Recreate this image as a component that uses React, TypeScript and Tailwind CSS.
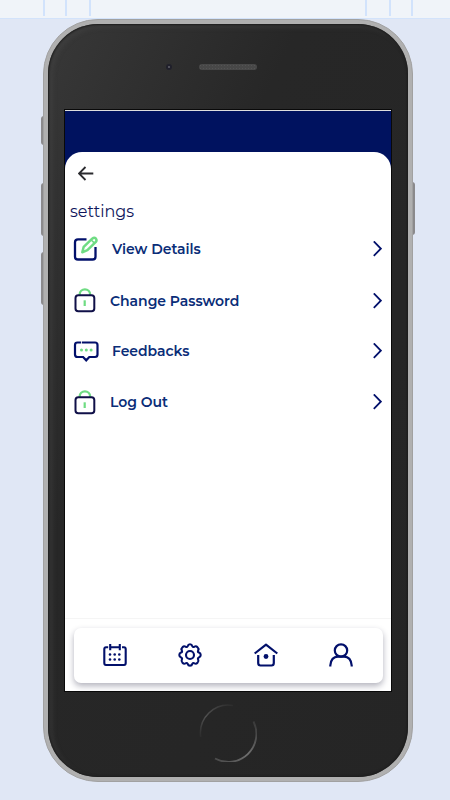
import React from 'react';

const NAVY = '#02106b';
const GREEN = '#6fdc83';

function BackIcon() {
  return (
    <svg width="16" height="15" viewBox="0 0 16 15" fill="none" stroke="#2b2b2f" strokeWidth="1.8">
      <path d="M15.3 7.5H1M7.5 1 1 7.5 7.5 14" />
    </svg>
  );
}

function EditIcon() {
  return (
    <svg width="26" height="26" viewBox="0 0 26 26" fill="none" strokeLinecap="round" strokeLinejoin="round">
      <path
        d="M13.5 3.3H5Q2 3.3 2 6.3V20.7Q2 23.5 5 23.5H19.5Q22.5 23.5 22.5 20.7V11"
        stroke={NAVY}
        strokeWidth="2.3"
        strokeLinecap="butt"
      />
      <path
        d="M9.3 16.3 10.7 10.8 19.2 2.7Q21.3 1 22.8 2.5 24.3 4.2 22.6 6.2L14.4 14.2Z"
        stroke={GREEN}
        strokeWidth="2.5"
      />
      <path d="m18.500 4.2 2.7 2.7" stroke={GREEN} strokeWidth="1.6" />
    </svg>
  );
}

function LockIcon() {
  return (
    <svg width="22" height="25" viewBox="0 0 22 25" fill="none">
      <path d="M5.700 7.500V6.300A5.200 5 0 0 1 16.100 6.300V7.500" stroke={GREEN} strokeWidth="2.3" />
      <rect x="1.500" y="7.300" width="18.800" height="16" rx="2.800" stroke="#101048" strokeWidth="2" />
      <path d="M10.700 12.300V18" stroke={GREEN} strokeWidth="2.2" />
    </svg>
  );
}

function ChatIcon() {
  return (
    <svg width="26" height="22" viewBox="0 0 26 22" fill="none">
      <path
        d="M9 2.500H22Q24.500 2.500 24.500 5V14.500Q24.500 17 22 17H16.300L13.200 20.300 10.100 17H4.500Q2 17 2 14.500V5Q2 2.500 4.500 2.500H8.200"
        stroke={NAVY}
        strokeWidth="2.2"
      />
      <g fill={GREEN}>
        <circle cx="8.500" cy="10" r="1.500" />
        <circle cx="13.300" cy="10" r="1.500" />
        <circle cx="18.100" cy="10" r="1.500" />
      </g>
    </svg>
  );
}

function ChevronIcon() {
  return (
    <svg width="10" height="16" viewBox="0 0 10 16" fill="none" stroke={NAVY} strokeWidth="1.800">
      <path d="m1.800 .4 7 7.200-7 7.200" />
    </svg>
  );
}

function CalendarIcon() {
  return (
    <svg width="24" height="24" viewBox="0 0 24 24" fill="none" stroke={NAVY} strokeWidth="2.100">
      <path d="M5.200 4.200H3Q1.300 4.200 1.300 6V20Q1.300 22 3 22H21Q22.700 22 22.700 20V6Q22.700 4.200 21 4.200H19M7.200 4.200H16.800M7.200 1V7.200M16.800 1V7.200" />
      <g fill={NAVY} stroke="none">
        {[11.5, 16.5].map((y) =>
          [7, 11.7, 16.3].map((x) => <circle key={`${x}-${y}`} cx={x} cy={y} r="1.300" />)
        )}
      </g>
    </svg>
  );
}

function GearIcon() {
  return (
    <svg width="24" height="24" viewBox="0 0 24 24" fill="none" stroke={NAVY} strokeWidth="2.100" strokeLinejoin="round">
      <path d="M9.700 3.100Q10.200 1.300 12 1.300T14.300 3.100Q15 4.500 16.500 3.600 18.100 2.700 19.500 4.300 21 5.700 20.200 7.300 19.500 8.900 20.900 9.600 22.700 10.200 22.700 12T20.900 14.400Q19.500 15.100 20.200 16.700 21 18.300 19.500 19.700 18.100 21.300 16.500 20.400 15 19.500 14.300 20.900 13.800 22.700 12 22.700T9.700 20.900Q9 19.500 7.500 20.400 5.900 21.300 4.500 19.700 3 18.300 3.800 16.700 4.500 15.100 3.100 14.400 1.300 13.800 1.300 12T3.100 9.600Q4.500 8.900 3.800 7.300 3 5.700 4.500 4.300 5.900 2.700 7.500 3.600 9 4.500 9.700 3.100Z" />
      <circle cx="12" cy="12" r="4" />
    </svg>
  );
}

function HomeIcon() {
  return (
    <svg width="24" height="24" viewBox="0 0 24 24" fill="none" stroke={NAVY} strokeWidth="2.200">
      <path d="M.7 10.500 12 1.700 23.300 10.500" strokeLinejoin="round" />
      <path d="M4.200 12V20Q4.200 22.500 6.500 22.500H17.500Q19.800 22.500 19.800 20V12" />
      <circle cx="12" cy="13.500" r="2.400" fill={NAVY} stroke="none" />
    </svg>
  );
}

function UserIcon() {
  return (
    <svg width="24" height="24" viewBox="0 0 24 24" fill="none" stroke={NAVY} strokeWidth="2.200">
      <circle cx="12" cy="7.500" r="6.200" />
      <path d="M1.300 23.500V22.500Q2 14 9 13.700H15Q22 14 22.700 22.500V23.500" />
    </svg>
  );
}

const menu = [
  { label: 'View Details', icon: <EditIcon />, row: 'h-[52px] pl-[8px]', text: 'pl-[13px]' },
  { label: 'Change Password', icon: <LockIcon />, row: 'h-[51px] pl-[9px]', text: 'pt-px pl-[14px]' },
  { label: 'Feedbacks', icon: <ChatIcon />, row: 'h-[50px] pl-[8px]', text: 'pl-[13px]' },
  { label: 'Log Out', icon: <LockIcon />, row: 'h-[52px] pl-[9px]', text: 'pt-px pl-[14px]' },
];

function Screen() {
  return (
    <div className="flex h-[581px] w-[326px] flex-col border-t border-[#dedede] bg-[#00125f] shadow-[0_0_0_1px_#090909]">
      <div className="h-[41px] shrink-0" />
      <div className="flex flex-1 flex-col rounded-t-[17px] bg-white">
        <div className="pt-[14px] pl-[13px]">
          <BackIcon />
        </div>
        <h1 className="mt-[19px] -mb-px pl-[5px] text-[16px] leading-[24px] text-[#10165c]">settings</h1>
        <ul className="flex flex-col">
          {menu.map((item) => (
            <li key={item.label} className={`flex items-center pr-[9px] ${item.row}`}>
              {item.icon}
              <span className={`flex-1 text-[14px] font-semibold tracking-[-0.03px] text-[#0a2d78] ${item.text}`}>
                {item.label}
              </span>
              <ChevronIcon />
            </li>
          ))}
        </ul>
        <nav className="mt-auto border-t border-[#f5f5f5] pt-[9px] pr-[8px] pb-[8px] pl-[9px]">
          <div className="flex h-[55px] items-center justify-between rounded-[7px] bg-white pr-[30px] pb-[2px] pl-[29px] shadow-[0_3px_6px_rgba(20,20,50,0.32)]">
            <CalendarIcon />
            <GearIcon />
            <HomeIcon />
            <UserIcon />
          </div>
        </nav>
      </div>
    </div>
  );
}

export default function App() {
  return (
    <div className="h-[800px] w-[450px] overflow-hidden bg-[#e0e7f5] font-['Montserrat','Inter',sans-serif]">
      <header className="flex h-[19px] justify-between border-b border-[#d3e3fb] bg-[#f0f4f9] pr-[37px] pl-[43px]">
        <div className="flex h-[16px] gap-[20px]">
          <i className="w-[2px] bg-[#d2e3fc]" />
          <i className="w-[2px] bg-[#d2e3fc]" />
          <i className="ml-[2px] w-[2px] bg-[#d2e3fc]" />
        </div>
        <div className="flex h-[16px] gap-[20px]">
          <i className="w-[2px] bg-[#d2e3fc]" />
          <i className="ml-[2px] w-[2px] bg-[#d2e3fc]" />
          <i className="w-[2px] bg-[#d2e3fc]" />
        </div>
      </header>

      <div className="relative ml-[43px] h-[763px] w-[370px]">
        {/* Side buttons */}
        <div className="absolute top-[97px] -left-[2px] h-[29px] w-[3px] rounded-l-sm bg-[#8b8a8c]" />
        <div className="absolute top-[164px] -left-[2px] h-[53px] w-[3px] rounded-l-sm bg-[#8b8a8c]" />
        <div className="absolute top-[233px] -left-[2px] h-[53px] w-[3px] rounded-l-sm bg-[#8b8a8c]" />
        <div className="absolute top-[163px] -right-[2px] h-[53px] w-[3px] rounded-r-sm bg-[#8b8a8c]" />

        <div className="relative h-full rounded-[55px] border border-[#a1a1a1] bg-[#b0b0b0] p-[4px]">
          <div className="flex h-full flex-col items-center rounded-[50px] bg-linear-to-br from-[#383838] via-[#272727] via-35% to-[#252525] shadow-[inset_0_0_2px_1px_#1c1c1c,inset_4px_3px_4px_1px_rgba(75,75,75,0.35)]">
            <div className="flex h-[86px] w-full shrink-0 items-start pt-[40px] pl-[118px]">
              <div className="flex size-[6px] items-center justify-center rounded-full bg-[#20202b]">
                <div className="size-[2px] rounded-full bg-[#62626c]" />
              </div>
              <div className="ml-[27px] h-[6px] w-[58px] rounded-full bg-[#484848] bg-[radial-gradient(#545454_1px,transparent_1px)] bg-size-[3px_3px]" />
            </div>
            <Screen />
            {/* Home button */}
            <svg className="mt-[13px]" width="58" height="58" viewBox="0 0 58 58" fill="none" strokeWidth="1.500">
              <defs>
                <linearGradient id="home-top" x1="0" y1="1" x2="1" y2="0">
                  <stop stopColor="#2c2c2c" />
                  <stop offset=".4" stopColor="#515151" />
                  <stop offset="1" stopColor="#2c2c2c" />
                </linearGradient>
                <linearGradient id="home-bottom" x1="1" y1="0" x2="0" y2="1">
                  <stop stopColor="#363636" />
                  <stop offset=".5" stopColor="#707070" />
                  <stop offset="1" stopColor="#484848" />
                </linearGradient>
              </defs>
              <path d="M1.700 33A28 28 0 0 1 34 1.500" stroke="url(#home-top)" />
              <path d="M54.500 17.500A28 28 0 0 1 16 54.500" stroke="url(#home-bottom)" strokeWidth="1.800" />
            </svg>
          </div>
        </div>
      </div>
    </div>
  );
}
